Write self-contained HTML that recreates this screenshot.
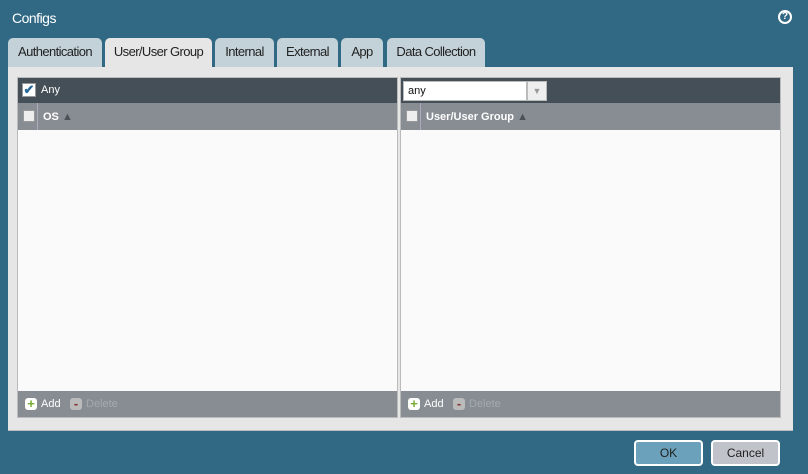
<!DOCTYPE html>
<html><head><style>
*{box-sizing:border-box;margin:0;padding:0}
body{width:808px;height:474px;background:#316985;font-family:"Liberation Sans",sans-serif;position:relative;overflow:hidden;font-size:12px}
.a{position:absolute}
.title{left:12px;top:10px;color:#fff;font-size:14px;letter-spacing:-0.5px}
.help{left:778px;top:10px;width:14px;height:14px;border:2px solid #fff;border-radius:50%;color:#fff;font-size:10px;font-weight:bold;text-align:center;line-height:10px}
.tab{top:38px;height:30px;background:#c3d2d9;border-radius:5px 5px 0 0;color:#222;font-size:13px;text-align:center;line-height:28px;letter-spacing:-0.6px}
.tab.on{background:#e6e6e6;height:31px}
.panel{left:8px;top:67px;width:785px;height:364px;background:#e6e6e6;border-bottom:1px solid #bbb}
.grid{top:77px;width:381px;height:341px;border:1px solid #bbb;background:#fafafa}
.h1{left:0;top:0;right:0;height:25px;background:#454f57;color:#fff}
.h2{left:0;top:25px;right:0;height:27px;background:#878d93;color:#fff;font-weight:bold;font-size:11px}
.ft{left:0;bottom:0;right:0;height:26px;background:#878d93;color:#fff;font-size:11px}
.cb{width:12px;height:12px;background:#eee;border:1px solid #999}
.sep{width:1px;top:0;bottom:0;background:#aab}
.btn{top:440px;width:69px;height:26px;border:2px solid #fff;border-radius:4px;text-align:center;line-height:22px;font-size:12px;color:#222}
.ic{width:12px;height:12px;border-radius:3px;background:#fff;color:#7a3;font-weight:bold;font-size:13px;line-height:11px;text-align:center}
.arr{color:#4a5157;font-size:11px}
</style></head><body>
<div class="a title">Configs</div>
<div class="a help">?</div>
<div class="a tab" style="left:8px;width:94px">Authentication</div>
<div class="a tab on" style="left:105px;width:107px">User/User Group</div>
<div class="a tab" style="left:215px;width:59px">Internal</div>
<div class="a tab" style="left:277px;width:61px">External</div>
<div class="a tab" style="left:341px;width:42px">App</div>
<div class="a tab" style="left:387px;width:98px">Data Collection</div>
<div class="a panel"></div>

<div class="a grid" style="left:17px">
 <div class="a h1">
  <div class="a" style="left:4px;top:5px;width:14px;height:14px;background:#fff;border:1px solid #999;color:#2a6a9a;font-size:13px;line-height:12px;text-align:center;font-weight:bold">✔</div>
  <div class="a" style="left:23px;top:6px;font-size:11px">Any</div>
 </div>
 <div class="a h2">
  <div class="a cb" style="left:5px;top:7px"></div>
  <div class="a sep" style="left:19px"></div>
  <div class="a" style="left:25px;top:8px">OS <span class="arr">▲</span></div>
 </div>
 <div class="a ft">
  <div class="a ic" style="left:7px;top:7px">+</div><div class="a" style="left:23px;top:7px">Add</div>
  <div class="a ic" style="left:52px;top:7px;background:#bbb;color:#833">-</div><div class="a" style="left:68px;top:7px;color:#a5aab0">Delete</div>
 </div>
</div>

<div class="a grid" style="left:400px">
 <div class="a h1">
  <div class="a" style="left:2px;top:3px;width:124px;height:20px;background:#fff;border:1px solid #bbb;color:#111;font-size:11px;line-height:18px;padding-left:4px">any</div>
  <div class="a" style="left:126px;top:3px;width:20px;height:20px;background:#eee;border:1px solid #bbb;color:#999;font-size:9px;text-align:center;line-height:18px">▼</div>
 </div>
 <div class="a h2">
  <div class="a cb" style="left:5px;top:7px"></div>
  <div class="a sep" style="left:19px"></div>
  <div class="a" style="left:25px;top:8px">User/User Group <span class="arr">▲</span></div>
 </div>
 <div class="a ft">
  <div class="a ic" style="left:7px;top:7px">+</div><div class="a" style="left:23px;top:7px">Add</div>
  <div class="a ic" style="left:52px;top:7px;background:#bbb;color:#833">-</div><div class="a" style="left:68px;top:7px;color:#a5aab0">Delete</div>
 </div>
</div>

<div class="a btn" style="left:634px;background:#6ba1bb">OK</div>
<div class="a btn" style="left:711px;background:#c0c3c9">Cancel</div>
</body></html>
